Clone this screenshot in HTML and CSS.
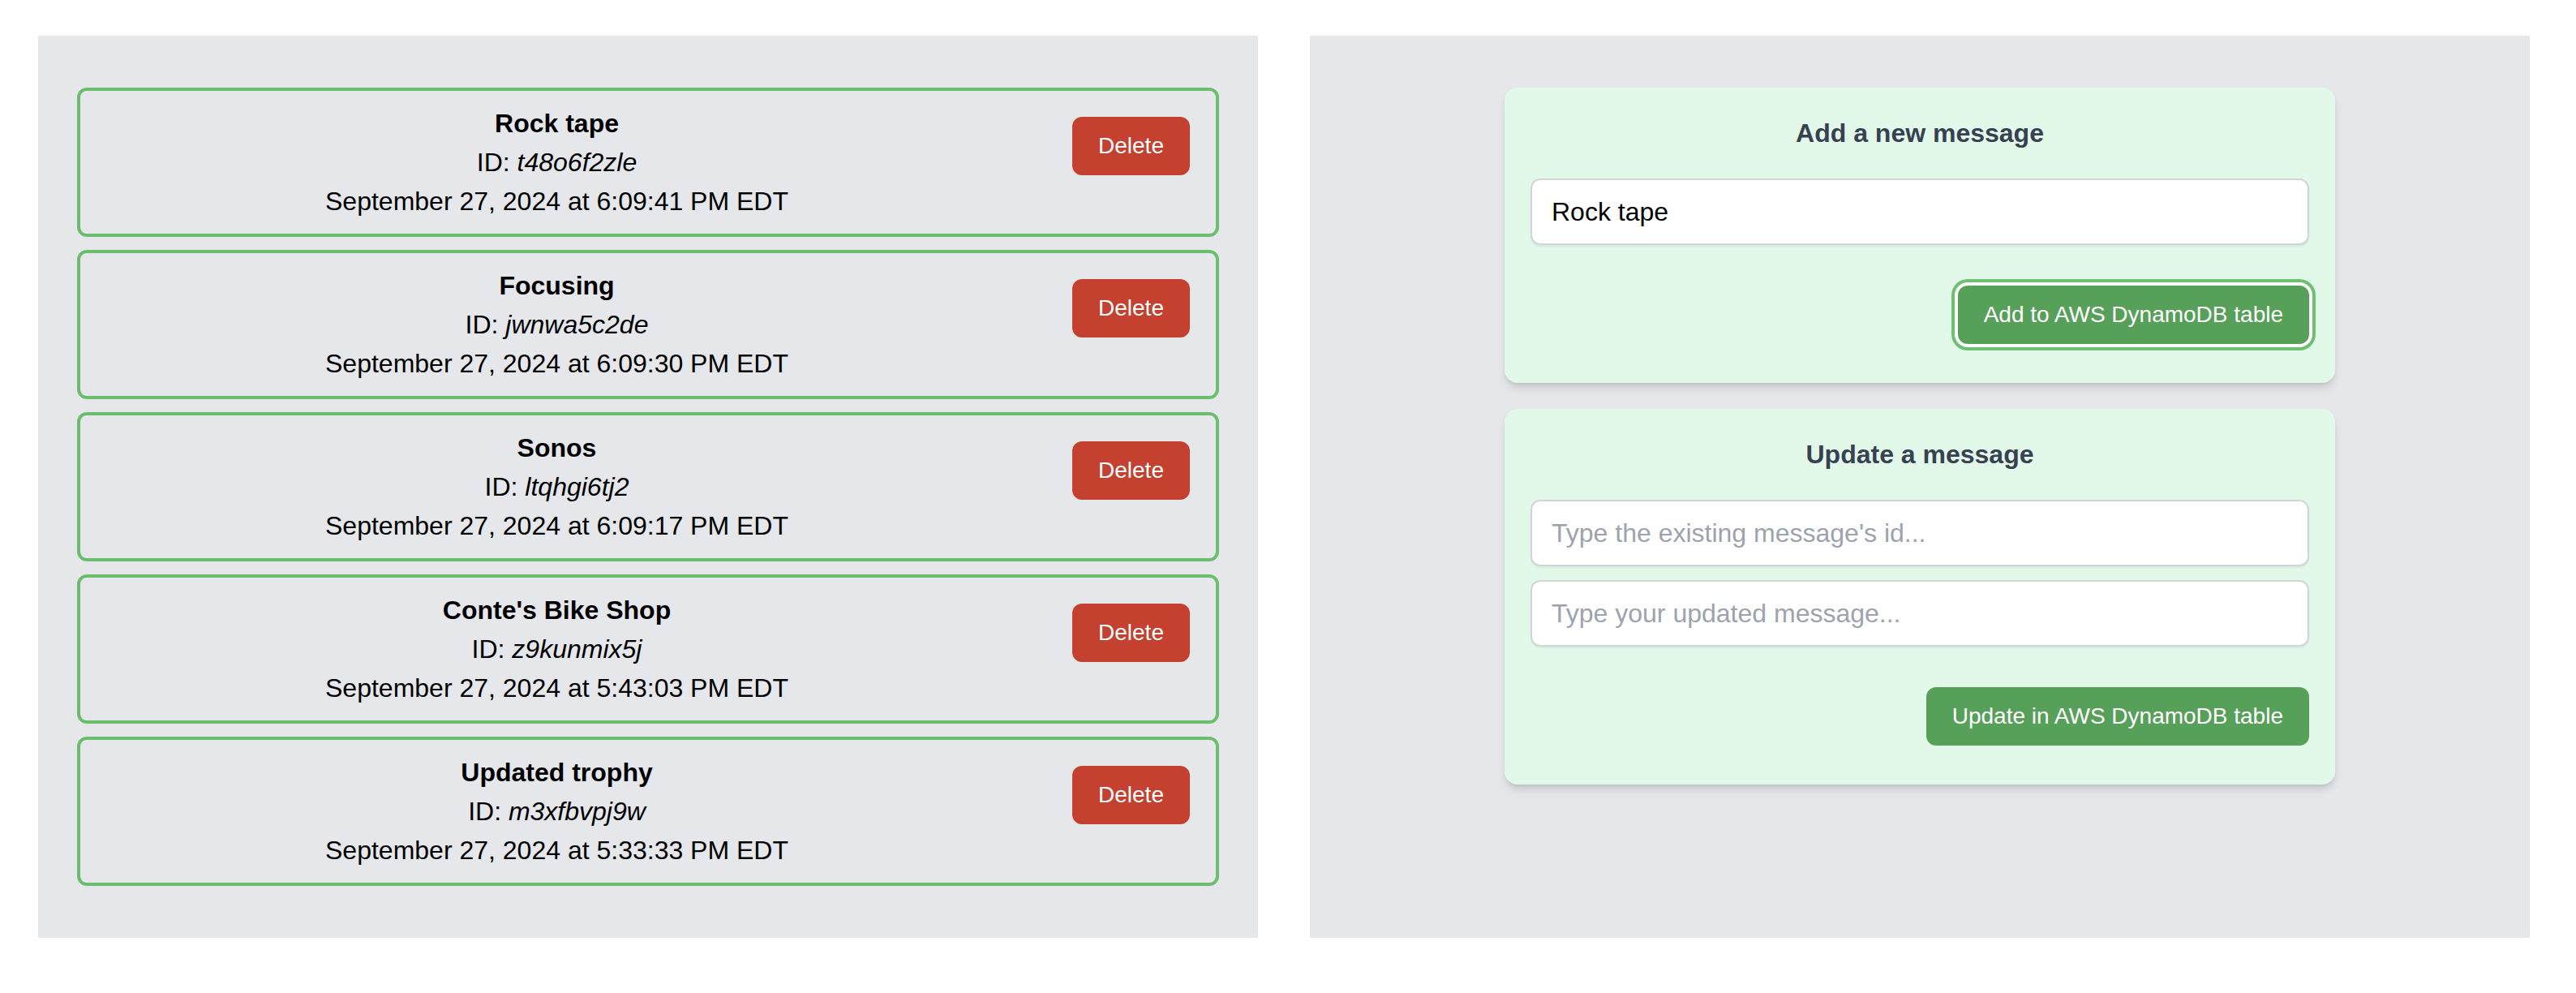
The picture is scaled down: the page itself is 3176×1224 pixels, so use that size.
FILE: index.html
```html
<!DOCTYPE html>
<html lang="en">
<head>
<meta charset="utf-8">
<title>Messages</title>
<link rel="stylesheet" href="styles.css">
</head>
<body>
<main class="layout">
  <section class="panel list-panel">
    <div class="msg-card">
      <div class="msg-text">
        <div class="msg-title">Rock tape</div>
        <div>ID: <em>t48o6f2zle</em></div>
        <div>September 27, 2024 at 6:09:41 PM EDT</div>
      </div>
      <button class="btn-delete">Delete</button>
    </div>
    <div class="msg-card">
      <div class="msg-text">
        <div class="msg-title">Focusing</div>
        <div>ID: <em>jwnwa5c2de</em></div>
        <div>September 27, 2024 at 6:09:30 PM EDT</div>
      </div>
      <button class="btn-delete">Delete</button>
    </div>
    <div class="msg-card">
      <div class="msg-text">
        <div class="msg-title">Sonos</div>
        <div>ID: <em>ltqhgi6tj2</em></div>
        <div>September 27, 2024 at 6:09:17 PM EDT</div>
      </div>
      <button class="btn-delete">Delete</button>
    </div>
    <div class="msg-card">
      <div class="msg-text">
        <div class="msg-title">Conte's Bike Shop</div>
        <div>ID: <em>z9kunmix5j</em></div>
        <div>September 27, 2024 at 5:43:03 PM EDT</div>
      </div>
      <button class="btn-delete">Delete</button>
    </div>
    <div class="msg-card">
      <div class="msg-text">
        <div class="msg-title">Updated trophy</div>
        <div>ID: <em>m3xfbvpj9w</em></div>
        <div>September 27, 2024 at 5:33:33 PM EDT</div>
      </div>
      <button class="btn-delete">Delete</button>
    </div>
  </section>

  <section class="panel form-panel">
    <div class="form-card">
      <h2 class="form-title">Add a new message</h2>
      <input class="text-input" type="text" value="Rock tape">
      <div class="actions">
        <button class="btn-primary focused">Add to AWS DynamoDB table</button>
      </div>
    </div>
    <div class="form-card">
      <h2 class="form-title">Update a message</h2>
      <input class="text-input" type="text" placeholder="Type the existing message's id...">
      <input class="text-input" type="text" placeholder="Type your updated message...">
      <div class="actions">
        <button class="btn-primary">Update in AWS DynamoDB table</button>
      </div>
    </div>
  </section>
</main>
</body>
</html>
```

FILE: styles.css
```css
* {
  box-sizing: border-box;
}

html, body {
  margin: 0;
  padding: 0;
  background: #ffffff;
}

body {
  font-family: "Liberation Sans", Arial, sans-serif;
  color: #000000;
}

.layout {
  display: grid;
  grid-template-columns: 1504px 1504px;
  column-gap: 64px;
  padding: 44px 0 0 47px;
}

.panel {
  background: #e5e7eb;
  height: 1112px;
  padding-top: 64px;
}

.list-panel {
  padding-left: 48px;
  padding-right: 48px;
  display: flex;
  flex-direction: column;
  gap: 16px;
}

.msg-card {
  display: flex;
  align-items: flex-start;
  border: 4px solid #6abf6c;
  border-radius: 12px;
  padding: 16px 32px;
  height: 184px;
}

.msg-text {
  flex: 1;
  text-align: center;
  font-size: 32px;
  line-height: 48px;
  padding-right: 80px;
}

.msg-title {
  font-weight: 700;
}

.msg-text em {
  font-style: italic;
}

.btn-delete {
  margin-top: 16px;
  background: #c4412f;
  color: #ffffff;
  border: none;
  border-radius: 12px;
  font-family: "Liberation Sans", Arial, sans-serif;
  font-size: 28px;
  line-height: 40px;
  padding: 16px 32px;
  width: 145px;
}

.form-panel {
  display: flex;
  flex-direction: column;
  align-items: center;
  gap: 32px;
}

.form-card {
  width: 1024px;
  background: #e2f9e9;
  border-radius: 16px;
  padding: 32px 32px 48px;
  box-shadow: 0 8px 12px -2px rgba(0, 0, 0, 0.12), 0 4px 6px -3px rgba(0, 0, 0, 0.1);
  display: flex;
  flex-direction: column;
}

.form-title {
  margin: 0 0 32px;
  text-align: center;
  font-size: 32px;
  line-height: 48px;
  font-weight: 700;
  color: #374151;
}

.text-input {
  display: block;
  width: 100%;
  height: 82px;
  border: 2px solid #d1d5db;
  border-radius: 12px;
  background: #ffffff;
  padding: 0 24px;
  font-family: "Liberation Sans", Arial, sans-serif;
  font-size: 32px;
  color: #000000;
  box-shadow: 0 2px 2px rgba(0, 0, 0, 0.06);
  outline: none;
}

.text-input + .text-input {
  margin-top: 17px;
}

.text-input::placeholder {
  color: #9ca3af;
}

.actions {
  display: flex;
  justify-content: flex-end;
  margin-top: 50px;
}

.btn-primary {
  background: #57a05a;
  color: #ffffff;
  border: none;
  border-radius: 12px;
  font-family: "Liberation Sans", Arial, sans-serif;
  font-size: 28px;
  line-height: 40px;
  padding: 16px 32px;
}

.btn-primary.focused {
  box-shadow: 0 0 0 4px #ffffff, 0 0 0 8px #6cc070;
}
```
